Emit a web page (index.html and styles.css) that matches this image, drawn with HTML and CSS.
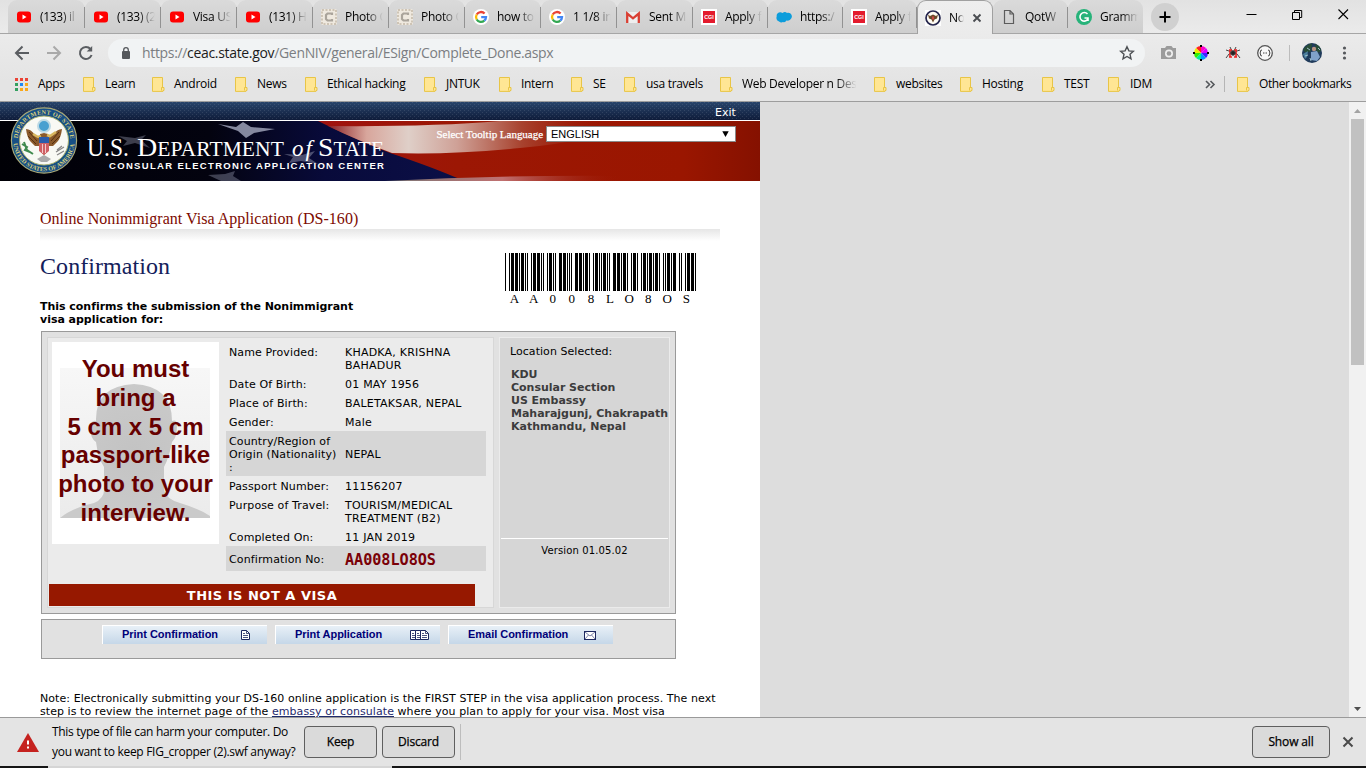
FILE: index.html
```html
<!DOCTYPE html>
<html lang="en">
<head>
<meta charset="utf-8">
<title>Nonimmigrant Visa - Confirmation</title>
<link rel="stylesheet" href="styles.css">
</head>
<body>
<svg width="0" height="0" class="defs">
  <defs>
    <symbol id="yt" viewBox="0 0 16 16"><rect x="1" y="2.500" width="14" height="11" rx="3" fill="#f00"/><path d="M6.500 5.500v5l4-2.500z" fill="#fff"/></symbol>
    <symbol id="photo" viewBox="0 0 16 16"><rect width="16" height="16" rx="2" fill="#efe9df"/><rect x="1" y="1" width="14" height="14" fill="none" stroke="#c3b8a8" stroke-width="1.500" stroke-dasharray="2 1.500"/><path d="M11 6V4.500H6.500L5 6v4l1.500 1.500H11V10" fill="none" stroke="#aaa49b" stroke-width="2.200"/></symbol>
    <symbol id="google" viewBox="0 0 16 16"><circle cx="8" cy="8" r="8" fill="#fff"/><g fill="none" stroke-width="2.300"><path d="M11.600 4.500A5 5 0 0 0 3.700 5.500" stroke="#ea4335"/><path d="M3.700 5.500A5 5 0 0 0 3.700 10.500" stroke="#fbbc05"/><path d="M3.700 10.500A5 5 0 0 0 11.300 11.700" stroke="#34a853"/><path d="M11.300 11.700A5 5 0 0 0 13 8.200H8.200" stroke="#4285f4"/></g></symbol>
    <symbol id="gmail" viewBox="0 0 16 16"><path d="M1 3h14v11H1z" fill="#eee"/><path d="M2.200 14V4.500L8 9.300l5.800-4.800V14" fill="none" stroke="#d93f33" stroke-width="2.300"/></symbol>
    <symbol id="cgi" viewBox="0 0 16 16"><rect width="16" height="16" fill="#fff"/><rect x="2" y="2" width="12" height="12" fill="#e31b2d"/><text x="3.200" y="10.200" textLength="9.600" lengthAdjust="spacingAndGlyphs" class="cgi-text">CGI</text></symbol>
    <symbol id="cloud" viewBox="0 0 16 16"><path d="M3 12.500Q-.5 11 .7 7.500C0 4 4 2 6.500 4Q9 2 11 4c3-1 6 2 4.500 5-1 2-3 3-5 2.500Q9 14 7 13q-2 1-4-.5z" fill="#0d9ddb"/></symbol>
    <symbol id="folder" viewBox="0 0 13 15"><path d="M.5.500h10v10h1.500v3h-1v.900H.500z" fill="#ffe694" stroke="#e8c547"/><path d="M9.500 13.500v-3h2" fill="none" stroke="#e8c547"/></symbol>
    <symbol id="page" viewBox="0 0 9 10"><path d="M.5.500h5l3 3v6h-8z" fill="#fff" stroke="#1d2860"/><path d="M5.500.500v3h3M2 5.500h5M2 7.500h5M2 3.500h2" fill="none" stroke="#1d2860" stroke-width=".8"/></symbol>
  </defs>
</svg>

<div class="browser">
  <header class="chrome">
    <div class="tabstrip">
      <div class="tabs">
        <div class="tab"><svg><use href="#yt"/></svg><span>(133) il</span></div>
        <div class="tab"><svg><use href="#yt"/></svg><span>(133) (2</span></div>
        <div class="tab"><svg><use href="#yt"/></svg><span>Visa US</span></div>
        <div class="tab"><svg><use href="#yt"/></svg><span>(131) H</span></div>
        <div class="tab"><svg><use href="#photo"/></svg><span>Photo C</span></div>
        <div class="tab"><svg><use href="#photo"/></svg><span>Photo C</span></div>
        <div class="tab"><svg><use href="#google"/></svg><span>how to</span></div>
        <div class="tab"><svg><use href="#google"/></svg><span>1 1/8 in</span></div>
        <div class="tab"><svg><use href="#gmail"/></svg><span>Sent M</span></div>
        <div class="tab"><svg><use href="#cgi"/></svg><span>Apply f</span></div>
        <div class="tab"><svg><use href="#cloud"/></svg><span>https:/</span></div>
        <div class="tab"><svg><use href="#cgi"/></svg><span>Apply f</span></div>
        <div class="tab active">
          <svg viewBox="0 0 16 16"><rect width="16" height="16" fill="#fff"/><circle cx="8" cy="8" r="7" fill="#fffdf5" stroke="#25264d" stroke-width="1.700"/><path d="M3 4.500L5 6l3-1.500L11 6l2-1.500-1 4-2.500 1L8 12.500l-1.500-3L4 8.500z" fill="#6b4a2b"/><path d="M7 6.500h2v3H7z" fill="#c44"/></svg>
          <span class="short">No</span>
          <svg class="close" viewBox="0 0 10 10"><path d="M1.500 1.500l7 7M8.500 1.500l-7 7" stroke="#4a4d51" stroke-width="1.900"/></svg>
        </div>
        <div class="tab"><svg viewBox="0 0 16 16"><path d="M3.500 1.500h5.500l3.500 3.500v9.500h-9zM9 1.500V5h3.500" fill="none" stroke="#5c5c5c" stroke-width="1.200"/></svg><span>QotW</span></div>
        <div class="tab last"><svg viewBox="0 0 16 16"><circle cx="8" cy="8" r="8" fill="#27b37a"/><path d="M11.500 5A4.300 4.300 0 1 0 12 10M8.500 9H12v3" fill="none" stroke="#fff" stroke-width="1.600"/></svg><span>Gramm</span></div>
      </div>
      <div class="newtab"><svg viewBox="0 0 28 28"><path d="M14 8.500v11M8.500 14h11" stroke="#000" stroke-width="2"/></svg></div>
      <svg class="winbtns" viewBox="0 0 120 33"><path d="M.5 14.500h10" stroke="#000"/><path d="M46.500 12.500h7v7h-7zM48.500 12V10.500h7.200v7H54" fill="none" stroke="#000"/><path d="M92.500 9.500l9.500 9.500M102 9.500L92.500 19" stroke="#000" stroke-width="1.100"/></svg>
    </div>
    <div class="toolbar">
      <svg class="nav" viewBox="0 0 90 24" fill="none" stroke="#5a5d61" stroke-width="2"><path d="M15 12H2M8.500 5.500L2 12l6.500 6.500"/><path d="M33 12h13M39.500 5.500L46 12l-6.500 6.500" stroke="#a9a9a9"/><path d="M76.500 8A6 6 0 1 0 77.600 14"/><path d="M78.200 5v5.500h-5.500z" fill="#5a5d61" stroke="none"/></svg>
      <div class="omnibox">
        <svg class="lock" viewBox="0 0 10 12"><rect x="1" y="4" width="8" height="8" rx="1" fill="#55585c"/><path d="M2.700 4V3a2.300 2.300 0 0 1 4.600 0v1" fill="none" stroke="#55585c" stroke-width="1.300"/></svg>
        <span class="url">https://<b>ceac.state.gov</b>/GenNIV/general/ESign/Complete_Done.aspx</span>
        <svg class="star" viewBox="0 0 16 16"><path d="M8 1.700l1.900 4.200 4.500.4-3.400 3 1 4.500L8 11.500l-4 2.300 1-4.500-3.400-3 4.500-.4z" fill="none" stroke="#4c4f53" stroke-width="1.400"/></svg>
      </div>
      <svg class="ext" viewBox="0 0 205 24">
        <path d="M2 7h3l1.500-2h5L13 7h3v11H1V7z" fill="#9b9b9b"/><circle cx="9" cy="12.500" r="4" fill="#eee"/><circle cx="9" cy="12.500" r="2.300" fill="#9b9b9b"/>
        <g transform="translate(41 12)"><path d="M0 0L0-7A7 7 0 0 1 5-5z" fill="#f0c"/><path d="M0 0L0-7A7 7 0 0 0-5-5z" fill="#f22"/><path d="M0 0L5-5A7 7 0 0 1 7 0z" fill="#d0f"/><path d="M0 0H7A7 7 0 0 1 5 5z" fill="#42f"/><path d="M0 0L5 5A7 7 0 0 1 0 7z" fill="#09f"/><path d="M0 0V7A7 7 0 0 1-5 5z" fill="#0e9"/><path d="M0 0L-5 5A7 7 0 0 1-7 0z" fill="#3e0"/><path d="M0 0H-7A7 7 0 0 1-5-5z" fill="#ee0"/><path d="M-8 0h2M6 0h2M0-8v2M0 6v2" stroke="#000" stroke-width="2"/></g>
        <g transform="translate(73 12)" fill="none" stroke="#444" stroke-width="1"><path d="M-7-3l3 1 3 2M7-3l-3 1-3 2M-7 5l3-4 3-1M7 5L4 1 1 0M-3-6l2 4M3-6L1-2"/><path d="M-3-3v7M3-3v7M-4-3h3M4-3H1M-4 4h3M4 4H1" stroke="#e22" stroke-width="1.600"/><circle r="2.300" fill="#222"/></g>
        <g transform="translate(105 12)"><circle r="7.300" fill="#f7f7f7" stroke="#555" stroke-width="1.300"/><path d="M-3-3q-2 0-1.500 2L-5 0l.5 1q-.5 2 1.500 2M3-3q2 0 1.500 2L5 0l-.5 1Q5 3 3 3M-2 0h1M-.5 0h1M1 0h1" fill="none" stroke="#444"/></g>
        <path d="M129.500 4v16" stroke="#bcbcbc"/>
        <g transform="translate(152 12)"><circle r="10" fill="#203b5b"/><path d="M-9-3Q-5-9 0-9.500L-1-2-6 0zM3-9q6 2 6 7L5 0z" fill="#284d38"/><path d="M-9 1l5-3-1 6-2 2z" fill="#4c7f9e"/><circle cx="2" cy="-4" r="2.200" fill="#b79382"/><path d="M-1-1L5-2l3 6-3 4-6-1z" fill="#7fa1c9"/><path d="M-5-5l3 2M-7 3l3-1M6-5l2 2M-2 5l1 3" stroke="#9fc0c8"/></g>
        <g fill="#55585c"><circle cx="184.500" cy="7" r="1.600"/><circle cx="184.500" cy="12" r="1.600"/><circle cx="184.500" cy="17" r="1.600"/></g>
      </svg>
    </div>
    <div class="bookmarks">
      <div class="bm"><svg class="apps" viewBox="0 0 13 13"><path d="M0 0h3v3H0zM5 0h3v3H5zM10 0h3v3h-3z" fill="#ea4335"/><path d="M0 5h3v3H0zM0 10h3v3H0z" fill="#34a060"/><path d="M5 5h3v3H5z" fill="#1e88f5"/><path d="M10 5h3v3h-3zM5 10h3v3H5zM10 10h3v3h-3z" fill="#f9a81a"/></svg><span class="s">Apps</span></div>
      <div class="bm"><svg><use href="#folder"/></svg><span>Learn</span></div>
      <div class="bm"><svg><use href="#folder"/></svg><span>Android</span></div>
      <div class="bm"><svg><use href="#folder"/></svg><span>News</span></div>
      <div class="bm"><svg><use href="#folder"/></svg><span>Ethical hacking</span></div>
      <div class="bm"><svg><use href="#folder"/></svg><span>JNTUK</span></div>
      <div class="bm"><svg><use href="#folder"/></svg><span>Intern</span></div>
      <div class="bm"><svg><use href="#folder"/></svg><span>SE</span></div>
      <div class="bm"><svg><use href="#folder"/></svg><span>usa travels</span></div>
      <div class="bm"><svg><use href="#folder"/></svg><span class="fade">Web Developer n Des</span></div>
      <div class="bm"><svg><use href="#folder"/></svg><span>websites</span></div>
      <div class="bm"><svg><use href="#folder"/></svg><span>Hosting</span></div>
      <div class="bm"><svg><use href="#folder"/></svg><span>TEST</span></div>
      <div class="bm"><svg><use href="#folder"/></svg><span>IDM</span></div>
      <div class="bm more"><svg viewBox="0 0 13 15"><path d="M1 4l3.500 3.500L1 11M5.500 4L9 7.500 5.500 11" fill="none" stroke="#55585c" stroke-width="1.600"/></svg></div>
      <div class="bm other"><svg><use href="#folder"/></svg><span>Other bookmarks</span></div>
    </div>
  </header>

  <main class="viewport">
    <div class="page">
      <div class="banner">
        <svg class="art" viewBox="0 0 760 79" width="760" height="79">
          <defs>
            <linearGradient id="navy" x2="0" y2="1"><stop offset="0" stop-color="#28446b"/><stop offset="1" stop-color="#0f1c3a"/></linearGradient>
            <linearGradient id="night"><stop offset="0" stop-color="#000006"/><stop offset=".45" stop-color="#03030f"/><stop offset=".7" stop-color="#080a3a"/><stop offset="1" stop-color="#0c1048"/></linearGradient>
            <linearGradient id="red"><stop offset="0" stop-color="#8d1014"/><stop offset=".35" stop-color="#a01214"/><stop offset=".6" stop-color="#9c1704"/><stop offset=".9" stop-color="#9a1600"/><stop offset="1" stop-color="#851100"/></linearGradient>
            <linearGradient id="pale"><stop offset="0" stop-color="#8a2024"/><stop offset=".12" stop-color="#d8a69c"/><stop offset=".25" stop-color="#dfcfc8"/><stop offset=".4" stop-color="#cfa197"/><stop offset=".6" stop-color="#a8432f"/><stop offset=".85" stop-color="#9a1c0a" stop-opacity="0"/></linearGradient>
            <linearGradient id="tail"><stop offset="0" stop-color="#777"/><stop offset=".5" stop-color="#c07070"/><stop offset="1" stop-color="#9c1704" stop-opacity="0"/></linearGradient>
            <pattern id="dots" width="4" height="4" patternUnits="userSpaceOnUse"><path d="M0 0h1v1H0zM2 2h1v1H2z" fill="#fff" opacity=".1"/></pattern>
            <path id="ringTop" d="M17.800 38.500a26.200 26.200 0 0 1 52.400 0"/>
            <path id="ringBottom" d="M13.200 38.500a30.800 30.800 0 0 0 61.600 0"/>
          </defs>
          <rect width="760" height="18" fill="url(#navy)"/><rect width="760" height="18" fill="url(#dots)"/>
          <rect y="18" width="760" height="1" fill="#fff"/>
          <rect y="19" width="760" height="60" fill="url(#red)"/>
          <path d="M0 19H318Q350 35 390 51Q435 66 464 79H0z" fill="url(#night)"/>
          <path d="M328 24Q430 25 500 19H650Q590 40 520 46Q450 53 392 51Q356 38 328 24z" fill="url(#pale)"/>
          <path d="M385 79Q500 73 620 74V79z" fill="url(#tail)"/>
          <g fill="#a6aac0" opacity=".8"><path d="M218 22l18 3 7-5 8 5 24 2-21 4-8 5-8-7z"/><path d="M118 34l17 2 11-3-5 5 9 8-15-5-12 3 4-5z" opacity=".45"/><path d="M284 52l18 1 13-4-6 7 9 6-17-3-12 2 4-6z" opacity=".55"/><path d="M208 73l17-1 10-3-2 5 8 5h-20z" opacity=".45"/></g>
          <g class="seal">
            <circle cx="44" cy="38.500" r="32.600" fill="#174f85" stroke="#a8a979" stroke-width="1.200"/>
            <circle cx="44" cy="38.500" r="24.500" fill="#f8f9f4" stroke="#a6ae6c"/>
            <text><textPath href="#ringTop" textLength="78" startOffset="2">DEPARTMENT OF STATE</textPath></text>
            <text><textPath href="#ringBottom" textLength="90" startOffset="3">UNITED STATES OF AMERICA</textPath></text>
            <circle cx="44" cy="24" r="6" fill="#48a0d0" stroke="#bcd9e4" stroke-width="2"/>
            <path d="M26 27q5 0 9 6l5 3 0-4 4-1 4 1 0 4 5-3q4-6 9-6-1 8-4 12l-5 5-4 0v4l-5 5-5-5v-4l-4 0-5-5q-3-4-4-12z" fill="#8a5a2b"/>
            <path d="M29 30l8 9M28 34l8 8M59 30l-8 9M60 34l-8 8" stroke="#54300f" stroke-width="1"/>
            <path d="M33 32l5 3 3-1M56 30l-6 4-3-1" stroke="#d7b65e" stroke-width="2.500" fill="none"/>
            <path d="M39 40h10v9l-5 4-5-4z" fill="#cf6064"/><path d="M39 35h10v6H39z" fill="#2a5caa"/><path d="M42.500 42v9M45.500 42v9" stroke="#f3c9c9"/>
            <path d="M22 42l5 3-2 3 5 2M24 40l3 8 6 4" stroke="#3f8a4e" stroke-width="2" fill="none"/><path d="M56 50l8-5M57 53l7-4M57 48l5-4" stroke="#888" stroke-width="1.300"/>
            <path d="M37 57l7-4 7 4-4 3h-6z" fill="#aaa"/>
          </g>
          <g class="brand"><text x="87" y="54" textLength="42" lengthAdjust="spacingAndGlyphs" class="big">U.S.</text><text x="137" y="54" textLength="147" lengthAdjust="spacingAndGlyphs"><tspan class="big">D</tspan>EPARTMENT</text><text x="292" y="54" textLength="20" class="of">of</text><text x="318" y="54" textLength="66" lengthAdjust="spacingAndGlyphs"><tspan class="big">S</tspan>TATE</text></g>
          <text x="109" y="67" textLength="275" class="sub">CONSULAR ELECTRONIC APPLICATION CENTER</text>
        </svg>
        <a class="exit">Exit</a>
        <div class="lang"><label>Select Tooltip Language</label><div class="select"><span>ENGLISH</span><svg viewBox="0 0 7 6"><path d="M.3.300h6.400L3.500 6z"/></svg></div></div>
      </div>

      <section class="content">
        <h1>Online Nonimmigrant Visa Application (DS-160)</h1>
        <div class="rule"></div>
        <div class="intro">
          <div>
            <h2>Confirmation</h2>
            <p class="lead">This confirms the submission of the Nonimmigrant<br>visa application for:</p>
          </div>
          <div class="barcode">
            <svg viewBox="0 0 191 38" width="191" height="38" shape-rendering="crispEdges">
              <defs>
                <path id="c39s" d="M0 0h1v38H0zM4 0h1v38H4zM6 0h3v38H6zM10 0h3v38h-3zM14 0h1v38h-1z"/>
                <path id="c39A" d="M0 0h3v38H0zM4 0h1v38H4zM6 0h1v38H6zM10 0h1v38h-1zM12 0h3v38h-3z"/>
                <path id="c390" d="M0 0h1v38H0zM2 0h1v38H2zM6 0h3v38H6zM10 0h3v38h-3zM14 0h1v38h-1z"/>
                <path id="c398" d="M0 0h3v38H0zM4 0h1v38H4zM8 0h1v38H8zM10 0h3v38h-3zM14 0h1v38h-1z"/>
                <path id="c39L" d="M0 0h1v38H0zM2 0h3v38H2zM6 0h1v38H6zM8 0h1v38H8zM12 0h3v38h-3z"/>
                <path id="c39O" d="M0 0h3v38H0zM4 0h1v38H4zM6 0h3v38H6zM10 0h1v38h-1zM14 0h1v38h-1z"/>
                <path id="c39S" d="M0 0h1v38H0zM2 0h3v38H2zM6 0h1v38H6zM8 0h3v38H8zM14 0h1v38h-1z"/>
              </defs>
              <use href="#c39s"/><use href="#c39A" x="16"/><use href="#c39A" x="32"/><use href="#c390" x="48"/><use href="#c390" x="64"/><use href="#c398" x="80"/><use href="#c39L" x="96"/><use href="#c39O" x="112"/><use href="#c398" x="128"/><use href="#c39O" x="144"/><use href="#c39S" x="160"/><use href="#c39s" x="176"/>
            </svg>
            <div class="code"><i>A</i><i>A</i><i>0</i><i>0</i><i>8</i><i>L</i><i>O</i><i>8</i><i>O</i><i>S</i></div>
          </div>
        </div>

        <div class="card">
          <div class="details">
            <div class="cols">
              <div class="photo">
                <div class="shot">
                  <svg viewBox="0 0 150 150" width="150" height="150"><defs><linearGradient id="pbg" x2="0" y2="1"><stop offset="0" stop-color="#f7f7f7"/><stop offset="1" stop-color="#ebebeb"/></linearGradient><radialGradient id="head"><stop offset="0" stop-color="#c3c3c3"/><stop offset="1" stop-color="#cacaca"/></radialGradient></defs><rect width="150" height="150" fill="url(#pbg)"/><path d="M0 150Q12 140 34 135Q45 130 44 120V99Q38 90 36 74Q29 70 31 57Q32 52 36 53Q35 18 74 16Q112 18 112 53Q117 51 117 57Q117 70 112 74Q109 90 104 99V122Q106 131 120 135Q140 141 150 148V150z" fill="url(#head)"/></svg>
                </div>
                <p>You must<br>bring a<br>5 cm x 5 cm<br>passport-like<br>photo to your<br>interview.</p>
              </div>
              <dl class="rows">
                <div><dt>Name Provided:</dt><dd>KHADKA, KRISHNA<br>BAHADUR</dd></div>
                <div><dt>Date Of Birth:</dt><dd>01 MAY 1956</dd></div>
                <div><dt>Place of Birth:</dt><dd>BALETAKSAR, NEPAL</dd></div>
                <div><dt>Gender:</dt><dd>Male</dd></div>
                <div class="shade"><dt>Country/Region of<br>Origin (Nationality)<br>:</dt><dd>NEPAL</dd></div>
                <div><dt>Passport Number:</dt><dd>11156207</dd></div>
                <div><dt>Purpose of Travel:</dt><dd>TOURISM/MEDICAL<br>TREATMENT (B2)</dd></div>
                <div><dt>Completed On:</dt><dd>11 JAN 2019</dd></div>
                <div class="shade conf"><dt>Confirmation No:</dt><dd>AA008LO8OS</dd></div>
              </dl>
            </div>
            <div class="notvisa">THIS IS NOT A VISA</div>
          </div>
          <div class="location">
            <div class="where"><p>Location Selected:</p><address>KDU<br>Consular Section<br>US Embassy<br>Maharajgunj, Chakrapath<br>Kathmandu, Nepal</address></div>
            <div class="version">Version 01.05.02</div>
          </div>
        </div>

        <div class="actions">
          <a><span>Print Confirmation</span><svg class="p1" viewBox="0 0 9 10"><use href="#page"/></svg></a>
          <a><span>Print Application</span><svg class="p3" viewBox="0 0 19 10"><use href="#page" width="9" height="10"/><use href="#page" x="5" width="9" height="10"/><use href="#page" x="10" width="9" height="10"/></svg></a>
          <a><span>Email Confirmation</span><svg class="mail" viewBox="0 0 12 9"><rect x=".5" y=".5" width="11" height="8" fill="#fff" stroke="#1d2860"/><path d="M1 1l5 4 5-4M1 8l3.500-4M11 8L7.500 4" fill="none" stroke="#5b6390" stroke-width=".8"/></svg></a>
        </div>

        <p class="note">Note: Electronically submitting your DS-160 online application is the FIRST STEP in the visa application process. The next<br>step is to review the internet page of the <a>embassy or consulate</a> where you plan to apply for your visa. Most visa</p>
      </section>
    </div>
    <div class="scroll">
      <svg viewBox="0 0 17 17"><path d="M5 11l3.500-4 3.500 4z" fill="#a3a3a3"/></svg>
      <div class="thumb"></div>
      <svg viewBox="0 0 17 17"><path d="M5 7h7l-3.500 4z" fill="#505050"/></svg>
    </div>
  </main>

  <footer class="downloads">
    <svg class="warn" viewBox="0 0 22 19"><path d="M11 0l11 19H0z" fill="#c5221f"/><path d="M10 7.500h2v4h-2zM10 13.500h2v2h-2z" fill="#fff"/></svg>
    <p>This type of file can harm your computer. Do<br>you want to keep FIG_cropper (2).swf anyway?</p>
    <button>Keep</button><button>Discard</button><i class="sep"></i>
    <button class="all">Show all</button>
    <svg class="x" viewBox="0 0 12 12"><path d="M1.500 1.500l9 9M10.500 1.500l-9 9" stroke="#4a4a4a" stroke-width="2"/></svg>
  </footer>
  <div class="taskbar"><i></i></div>
</div>
</body>
</html>
```

FILE: styles.css
```css
* { box-sizing: border-box; }
body { margin: 0; overflow: hidden; font-family: "DejaVu Sans", Verdana, sans-serif; font-size: 11px; letter-spacing: .065px; color: #000; }
p, h1, h2, dl, dd { margin: 0; font-weight: normal; }
svg { display: block; flex: none; }
.defs { position: absolute; }
.browser { width: 1366px; height: 768px; display: flex; flex-direction: column; }

/* browser chrome */
.chrome { height: 102px; flex: none; background: linear-gradient(#e2e2e2, #ebebeb 33%, #e4e4e4 80%); border-bottom: 1px solid #9d9d9d; font-family: "Open Sans", "Noto Sans", sans-serif; font-size: 12px; letter-spacing: -.3px; }
.tabstrip { height: 34px; display: flex; border-bottom: 1px solid #a6a6a6; padding-left: 8px; }
.tabs { display: grid; grid-template-columns: 77px repeat(8, 76px) 75px 75px 74px 76px 75px 75px; width: 1135px; flex: none; height: 34px; }
.tab { display: flex; align-items: center; padding-left: 8px; border-right: 1px solid #929292; border-image: linear-gradient(transparent 22%, #929292 22%, #929292 82%, transparent 82%) 1; background: linear-gradient(#dadada, #cecece); height: 33px; border-radius: 9px 9px 0 0; overflow: hidden; }
.tab svg { width: 16px; height: 16px; }
.tab span { margin-left: 8px; width: 43px; padding-bottom: 1px; white-space: nowrap; overflow: hidden; -webkit-mask-image: linear-gradient(90deg, #000 50%, transparent 88%); mask-image: linear-gradient(90deg, #000 50%, transparent 88%); }
.tab.active { height: 34px; background: linear-gradient(#eee, #ebebeb); border: 1px solid #a0a0a0; border-bottom: 0; border-image: none; padding-left: 7px; }
.tab .short { width: 17px; }
.tab .close { width: 10px; height: 10px; margin-left: 6px; }
.tab.last { border-right: 0; border-image: none; }
.tab.last span { width: 44px; }
.cgi-text { font: bold 6px "Liberation Sans", sans-serif; fill: #fff; letter-spacing: 0; }
.newtab { margin: 3px 0 0 8px; width: 28px; height: 28px; border-radius: 50%; background: #d0d0d0; flex: none; }
.newtab svg { width: 28px; height: 28px; }
.winbtns { width: 120px; height: 33px; margin-left: 67px; }
.toolbar { height: 37px; display: flex; align-items: center; padding-top: 1px; }
.nav { width: 90px; height: 24px; margin-left: 14px; }
.omnibox { margin-left: 4px; width: 1037px; height: 28px; border-radius: 14px; background: #f1f3f4; display: flex; align-items: center; padding: 0 10px 0 13px; flex: none; }
.lock { width: 10px; height: 12px; }
.url { margin-left: 11px; flex: 1; font-size: 14px; letter-spacing: -.33px; color: #7b7e82; padding-bottom: 2px; }
.url b { font-weight: normal; color: #1c1c1c; }
.star { width: 16px; height: 16px; }
.ext { width: 205px; height: 24px; margin-left: 15px; }
.bookmarks { height: 26px; display: grid; align-items: center; padding-left: 15px; grid-template-columns: 68px 69px 83px 70px 119px 75px 72px 53px 96px 154px 86px 82px 66px 97px 32px 120px; }
.bm { display: flex; align-items: center; white-space: nowrap; }
.bm svg { width: 13px; height: 15px; }
.bm .apps { height: 13px; }
.bm span { margin-left: 9px; padding-bottom: 1px; }
.bm .s { margin-left: 10px; }
.bm .fade { width: 118px; overflow: hidden; -webkit-mask-image: linear-gradient(90deg, #000 80%, transparent 97%); mask-image: linear-gradient(90deg, #000 80%, transparent 97%); }
.bm.more { width: 20px; border-right: 1px solid #b5b5b5; height: 16px; }
.bm.other { letter-spacing: -.42px; }

/* page viewport */
.viewport { height: 615px; display: flex; overflow: hidden; background: #ddd; }
.page { width: 760px; background: #fff; }
.banner { position: relative; height: 79px; }
.exit { position: absolute; right: 24px; top: 4px; color: #fff; line-height: 14px; }
.lang { position: absolute; right: 24px; top: 24px; display: flex; align-items: center; }
.lang label { font: 11px "Liberation Serif", serif; color: #fff; margin-right: 3px; letter-spacing: -.03px; -webkit-text-stroke: .25px #fff; }
.select { width: 190px; height: 16px; border: 1px solid #8a8a8a; background: #fff; display: flex; align-items: center; justify-content: space-between; padding: 0 6px 0 4px; font: 11px "Liberation Sans", sans-serif; letter-spacing: 0; }
.select svg { width: 7px; height: 6px; }
.brand { font: 20px "Liberation Serif", serif; fill: #fff; }
.brand .big { font-size: 26px; }
.brand .of { font-size: 23px; font-style: italic; }
.sub { font: bold 9.500px "Liberation Sans", sans-serif; fill: #fff; }
.seal text { font: bold 6.200px "Liberation Serif", serif; fill: #d7ce7c; }
.content { padding: 28px 40px 0; }
h1 { font: 16px/20px "Liberation Serif", serif; color: #7d0a00; letter-spacing: .03px; }
.rule { height: 12px; background: linear-gradient(#e6e6e6, #fff); }
.intro { display: flex; justify-content: space-between; height: 90px; }
h2 { font: 24px/28px "Liberation Serif", serif; color: #14215b; margin-top: 11px; }
.lead { font-weight: bold; line-height: 13px; margin-top: 20px; letter-spacing: -.03px; white-space: nowrap; }
.barcode { width: 191px; margin: 12px 24px 0 0; }
.code { display: flex; font: 13px/15px "Liberation Serif", serif; }
.code i { width: 19.100px; text-align: center; font-style: normal; }
.card { margin-left: 1px; width: 635px; height: 283px; border: 1px solid #9a9a9a; background: #e1e1e1; padding: 5px; display: flex; gap: 5px; }
.details { width: 447px; height: 271px; background: #ebebeb; border: 1px solid #d7d7d7; padding: 4px; }
.cols { display: flex; gap: 7px; height: 242px; }
.photo { width: 167px; height: 202px; background: #fff; position: relative; padding: 26px 8px; flex: none; }
.photo p { position: absolute; left: 0; top: 13px; width: 167px; text-align: center; font: bold 24px/28.800px "Liberation Sans", sans-serif; letter-spacing: 0; color: #660000; white-space: nowrap; }
.rows { width: 260px; line-height: 13px; letter-spacing: .12px; }
.rows > div { display: flex; align-items: center; padding: 4px 3px 2px; }
.rows dt { width: 116px; white-space: nowrap; }
.rows dd { letter-spacing: .22px; }
.rows > div:first-child, .rows > div:nth-child(7) { align-items: flex-start; }
.shade { background: #d6d6d6; }
.rows .conf { height: 25px; }
.rows .conf dd { font: bold 15.200px "DejaVu Sans Mono", monospace; letter-spacing: -.05px; color: #7a0008; }
.notvisa { width: 426px; height: 22px; background: #961800; color: #fff; font-weight: bold; font-size: 13px; line-height: 23px; letter-spacing: .5px; text-align: center; margin-left: -3px; }
.location { width: 171px; height: 271px; background: #d6d6d6; border: 1px solid #ebebeb; }
.where { height: 201px; margin: 0 1px; border-bottom: 1px solid #fff; padding: 7px 0 0 9px; line-height: 13px; }
.where p { letter-spacing: .05px; }
address { font-style: normal; font-weight: bold; color: #3c3c3c; margin: 10px 0 0 1px; letter-spacing: -.02px; white-space: nowrap; }
.version { font-size: 10px; text-align: center; margin-top: 6px; letter-spacing: .13px; }
.actions { margin: 5px 0 0 1px; width: 635px; height: 40px; border: 1px solid #9a9a9a; background: #e1e1e1; display: flex; gap: 8px; padding: 5px 0 0 60px; }
.actions a { width: 165px; height: 19px; border-top: 1px solid #fff; border-left: 1px solid #fff; background: linear-gradient(#e8f0f7, #c5d7e8); font: bold 11px/17px "Liberation Sans", sans-serif; letter-spacing: -.03px; color: #000078; display: flex; padding-left: 19px; }
.actions a span { white-space: nowrap; width: 118px; }
.p1 { width: 9px; height: 10px; margin: 4px 0 0 1px; }
.p3 { width: 19px; height: 10px; margin: 4px 0 0 -3px; }
.mail { width: 12px; height: 9px; margin: 5px 0 0 -2px; }
.note { margin-top: 33px; line-height: 13px; white-space: nowrap; }
.note a { color: #1f2b6c; text-decoration: underline; }
.scroll { margin-left: auto; width: 17px; background: #f1f1f1; display: flex; flex-direction: column; justify-content: space-between; }
.scroll svg { width: 17px; height: 17px; }
.thumb { width: 13px; height: 246px; margin: 0 0 auto 2px; background: #c1c1c1; }

/* download shelf */
.downloads { height: 49px; background: #e4e4e4; border-top: 1px solid #9a9a9a; display: flex; align-items: center; font: 12px/20px "Open Sans", "Noto Sans", sans-serif; padding-left: 17px; }
.warn { width: 22px; height: 19px; margin-top: 1px; }
.downloads p { width: 252px; margin-left: 13px; white-space: nowrap; letter-spacing: -.3px; }
.downloads button { width: 73px; height: 32px; border: 1px solid #5f5f5f; border-radius: 4px; background: #dadada; font: 12px "Open Sans", "Noto Sans", sans-serif; -webkit-text-stroke: .25px #000; color: #000; padding: 0 0 2px; margin: 0 5px 0 0; letter-spacing: -.15px; }
.sep { width: 1px; height: 36px; background: #bdbdbd; }
.downloads .all { margin-left: auto; width: 78px; margin-right: 12px; }
.x { width: 12px; height: 12px; margin-right: 12px; }
.taskbar { height: 2px; background: #151515; padding-left: 48px; }
.taskbar i { display: block; width: 344px; height: 2px; background: #d5d5d5; }
```
